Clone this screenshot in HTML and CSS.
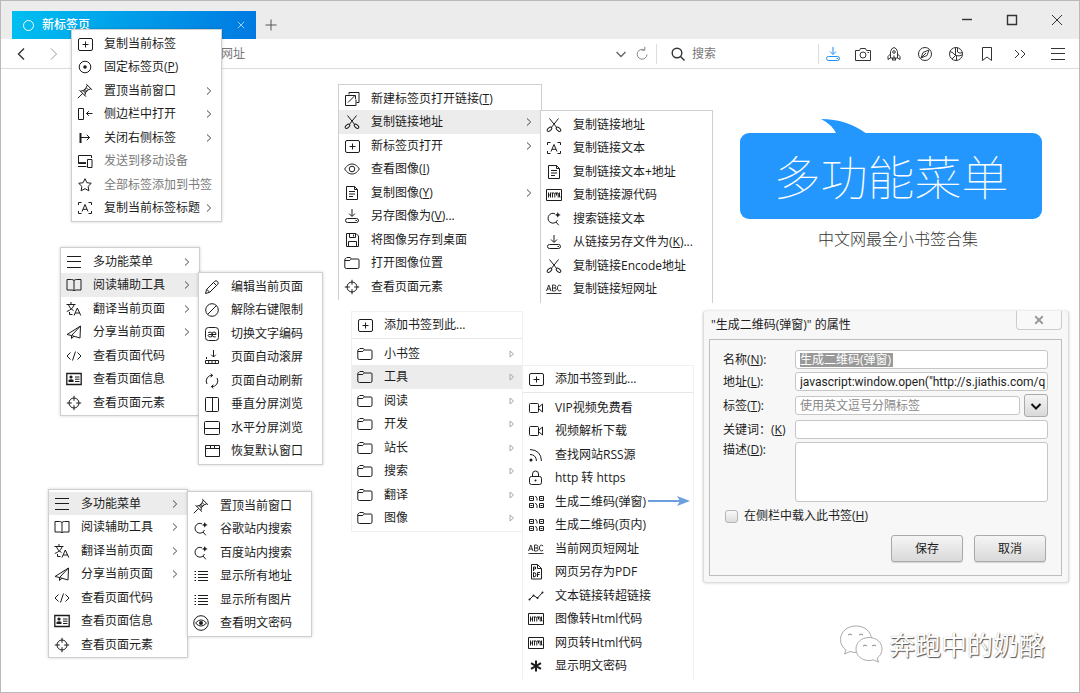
FILE: index.html
```html
<!DOCTYPE html>
<html lang="zh-CN">
<head>
<meta charset="utf-8">
<meta name="viewport" content="width=device-width, initial-scale=1">
<title>新标签页</title>
<link rel="stylesheet" href="styles.css">
</head>
<body>
<svg class="sprite" aria-hidden="true">
  <symbol id="plusbox" viewBox="0 0 16 16"><rect x="1.500" y="2.500" width="14" height="12" rx="1.500"/><path d="M8.500 5.500v6M5.500 8.500h6"/></symbol>
  <symbol id="target" viewBox="0 0 16 16"><circle cx="8" cy="8" r="5.800"/><circle class="solid" cx="8" cy="8" r="1.800"/></symbol>
  <symbol id="pin" viewBox="0 0 16 16"><path d="M.8 15.200 5.800 10.300M2.500 7.200l6.500 6.500M3.500 8.200Q6.500 8.500 9.200 4.700M7.800 12.500Q7.500 9.500 11.300 6.800M9.200 1l5.800 5.800M10.300 2.100 9.200 4.700l2.100 2.100L13.900 5.700"/><circle cx="8" cy="8" r="1.300"/></symbol>
  <symbol id="sidebar" viewBox="0 0 16 16"><path d="M1.500 2.500h5v11h-5zM15.500 7.500H9.500M11.800 5.200 9.500 7.500l2.300 2.300"/></symbol>
  <symbol id="closeright" viewBox="0 0 16 16"><path stroke-width="2" d="M3.500 3v10"/><path d="M4 7.500h8.500M9.800 4.800 12.500 7.500l-2.700 2.700"/></symbol>
  <symbol id="devices" viewBox="0 0 16 16"><path d="M14.500 5V2.500h-13v8H9M1 13.500h8.500M10.500 6.500H15v8h-4.500z"/><path stroke-width="1.800" d="M1.500 10H9"/></symbol>
  <symbol id="star" viewBox="0 0 16 16"><path d="m8 1.700 1.900 4 4.400.6-3.200 3.100.8 4.400L8 11.700l-3.900 2.100.8-4.400-3.200-3.100 4.400-.6z"/></symbol>
  <symbol id="scanA" viewBox="0 0 16 16"><path d="M1.500 5V2.500h3M11.500 2.500h3V5M14.500 11v2.500h-3M4.500 13.500h-3V11M5 11.500 8 4.500l3 7M6 9.300h4"/></symbol>
  <symbol id="open" viewBox="0 0 16 16"><path d="M5 3.500v-2h10v10h-2.500M8 4.500H1.500v10h10.500V8.500M4 11.500 11 4.500M8 4.500h3.500V8"/></symbol>
  <symbol id="cut" viewBox="0 0 16 16"><path d="M3.500 1.500 10.700 10.500M12.500 1.500 5.300 10.500"/><ellipse cx="3.500" cy="12.300" rx="2.700" ry="1.500" transform="rotate(-40 3.500 12.300)"/><ellipse cx="12.500" cy="12.300" rx="2.700" ry="1.500" transform="rotate(40 12.500 12.300)"/></symbol>
  <symbol id="eye" viewBox="0 0 16 16"><path d="M.7 8C3 4.300 5.500 3 8 3s5 1.300 7.300 5C13 11.700 10.500 13 8 13S3 11.700.7 8z"/><circle cx="8" cy="8" r="2.800"/></symbol>
  <symbol id="doc" viewBox="0 0 16 16"><path d="M2.500 1.500h8l3 3v10h-11zM10.500 1.500v3h3M5 6.500h6M5 9h6M5 11.500h4"/></symbol>
  <symbol id="save" viewBox="0 0 16 16"><path d="M8 1v7M5 5.500l3 3 3-3"/><rect x="1.500" y="10.500" width="13" height="4" rx="2"/><path d="M11.500 12.500h1.500"/></symbol>
  <symbol id="floppy" viewBox="0 0 16 16"><path d="M2.500 1.500h9.500l2.500 2.500v10.500h-12zM5.500 1.500v4h6v-4M9.500 2.500v2M4.500 14.500v-5h8v5"/></symbol>
  <symbol id="folder" viewBox="0 0 16 16"><path d="M.8 4.500q0-1 1-1l1-1h3.500l1.200 1.500h6.500q1 0 1 1V12q0 1.500-1.500 1.500H2.300Q.8 13.500.8 12zM.8 5.500h5l1.500-1.500"/></symbol>
  <symbol id="cross" viewBox="0 0 16 16"><circle cx="8" cy="8" r="5"/><path d="M8 .8v5M8 10.200v5M.8 8h5M10.200 8h5"/></symbol>
  <symbol id="html" viewBox="0 0 16 16"><path d="M.5 2.500h15v11H.5z"/><path d="M2.500 5.500v5M4.500 5.500v5M2.500 8h2M5.500 6h2.500M6.500 6v4.500M8.800 10.500V6h3.400v4.500M10.500 6v2.500M13.500 5.500V10h1"/></symbol>
  <symbol id="searchplus" viewBox="0 0 16 16"><path d="M9 2.800A4.900 4.900 0 1 0 11.500 9M10 11l2.800 3.300"/><path class="solid" d="M11.800 1l.9 2 2 .9-2 .9-.9 2-.9-2-2-.9 2-.9z"/></symbol>
  <symbol id="abc" viewBox="0 0 16 16"><path stroke-width=".9" d="M.5 10 2.800 4 5 10M1.300 8h3M6.500 4v6h1.800q1.900-.1 1.900-1.600T8.300 7H6.500M6.500 4h1.800q1.600.1 1.600 1.500T8.300 7M15.200 5q-3.300-2.500-3.800 2 .5 4.500 3.800 2.200M.5 12.500h15"/></symbol>
  <symbol id="lines" viewBox="0 0 16 16"><path d="M1 2.500h14M1 7.500h14M1 13.500h14"/></symbol>
  <symbol id="book" viewBox="0 0 16 16"><path d="M8 3.500Q7 2.500 5.500 2.500H1v10.500h5q1.500 0 2 1 .5-1 2-1h5V2.500h-4.500Q9 2.500 8 3.500zV14"/></symbol>
  <symbol id="translate" viewBox="0 0 16 16"><path d="M.5 3.500h9M5 1v2.500M2.500 4q1.500 4 5 5.500M8 4Q6.500 8.500.8 10.500M8 14.500l3.300-7.500 3.500 7.500M9.200 12h4.600M3.500 11v2.500h3"/></symbol>
  <symbol id="send" viewBox="0 0 16 16"><path d="M14.500 2 1 10.500l4.500 1L14 14zM14.500 2l-9 9.500v3L8 12.200"/></symbol>
  <symbol id="code" viewBox="0 0 16 16"><path d="M4.500 4.500 1 8l3.500 3.500M11.500 4.500 15 8l-3.500 3.500M9.500 3.500l-3 9"/></symbol>
  <symbol id="card" viewBox="0 0 16 16"><path stroke-width="1.300" d="M.8 2.500h14.400v11H.8z"/><circle class="solid" cx="5" cy="6" r="1.600"/><path class="solid" d="M2.500 11V9q2.500-1.500 5 0v2z"/><path d="M9 6h4.500M9 8.200h4.500M9 10.500h4.500"/></symbol>
  <symbol id="pencil" viewBox="0 0 16 16"><path d="m1.500 14.500 1.200-4.200 8-8Q12 1 13.500 2.500T13.700 5.300l-8 8zM9.500 3.500l3 3M2.700 10.300l3 3"/></symbol>
  <symbol id="ban" viewBox="0 0 16 16"><circle cx="8" cy="8" r="6.300"/><path d="m3.500 12.500 9-9"/></symbol>
  <symbol id="ae" viewBox="0 0 16 16"><rect x="1.500" y="1.500" width="13" height="13" rx="3"/><path d="M4.200 6.500q3.300-1.300 3.800.8v3.200q-1.500.6-3 .3-1.700-1.300-.3-2.300H12q.2-2.500-2-2.500t-2 2.300 2 2.600h1.800"/></symbol>
  <symbol id="scroll" viewBox="0 0 16 16"><path d="M9.500 1v7M7.200 5.700 9.500 8l2.300-2.300M2.500 8v2M1.500 11.500h13v3h-13zM4.700 11.500v3M8 11.500v3M11.300 11.500v3"/></symbol>
  <symbol id="refresh2" viewBox="0 0 16 16"><path d="M3 11A5.700 5.700 0 0 1 8.500 2.400M6.700.7 8.700 2.400 6.700 4.300M13 5a5.700 5.700 0 0 1-5.500 8.600M9.300 11.700l-2 1.900 2 1.700"/></symbol>
  <symbol id="vsplit" viewBox="0 0 16 16"><rect x="1.500" y="1.500" width="13" height="14" rx="1"/><path d="M8.500 1.500v14"/></symbol>
  <symbol id="hsplit" viewBox="0 0 16 16"><rect x=".5" y="1.500" width="15" height="13" rx="1"/><path d="M1 8.500h14"/></symbol>
  <symbol id="window" viewBox="0 0 16 16"><path d="M1.500 2.500h14v11h-14zM1.500 5.500h14M6.500 2.500v3M10.500 2.500v3"/></symbol>
  <symbol id="list" viewBox="0 0 16 16"><path d="M5 3.500h10M5 6.500h10M5 9.500h10M5 12.500h10M1.500 3.500H3M1.500 6.500H3M1.500 9.500H3M1.500 12.500H3"/></symbol>
  <symbol id="eyering" viewBox="0 0 16 16"><circle cx="8" cy="8" r="7.300"/><path d="M2.500 8Q8 1.800 13.500 8 8 14.200 2.500 8z"/><circle class="solid" cx="8" cy="8" r="2"/></symbol>
  <symbol id="video" viewBox="0 0 16 16"><rect x="1.500" y="3.500" width="9" height="9" rx="1"/><path d="M10.500 7.500 14.500 4v8L10.500 8.500"/></symbol>
  <symbol id="rss" viewBox="0 0 16 16"><circle class="solid" cx="3" cy="13" r="1.500"/><path d="M2 7.500Q8 7.500 8.500 14M2 2.500Q13 3 13.500 14"/></symbol>
  <symbol id="lock" viewBox="0 0 16 16"><path d="M4.500 6.500V4q0-3 3-3t3 3v2.500"/><rect x="1.500" y="6.500" width="12" height="8" rx="2"/><circle class="solid" cx="7.500" cy="10.500" r="1"/></symbol>
  <symbol id="qr" viewBox="0 0 16 16"><path d="M1.500 2.500h4v4h-4zM11.500 2.500h4v4h-4zM1.500 9.500h4v4h-4zM11.500 9.500h4v4h-4zM7.500 2l1.500 2.500v2M7.500 9l1.500 2.500v2.500M2.500 4.500h2M12.500 4.500h2M2.500 11.500h2M12.500 11.500h2"/></symbol>
  <symbol id="pdf" viewBox="0 0 16 16"><path d="M3.500.5h6l4 4v10.500h-10zM9.500.5v4h4M5.500 7V3h2v2h-2M5.500 8.500v4.500q2.500 0 2.500-2.200T5.500 8.500zM9.500 13V8.500H12M9.500 10.500h2"/></symbol>
  <symbol id="chart" viewBox="0 0 16 16"><path d="m1.500 11.500 4-4 4 2.500 5-5.500"/><g class="solid"><circle cx="1.500" cy="11.500" r="1"/><circle cx="5.500" cy="7.500" r="1"/><circle cx="9.500" cy="10" r="1"/><circle cx="14.500" cy="4.500" r="1"/></g></symbol>
  <symbol id="asterisk" viewBox="0 0 16 16"><path stroke-width="2" d="M8 2.500v11M3 5.200l10 5.600M13 5.200 3 10.800"/></symbol>
  <symbol id="chev" viewBox="0 0 6 10"><path d="m1 1.500 3.700 3.500L1 8.500"/></symbol>
  <symbol id="tri" viewBox="0 0 6 10"><path d="M1 2 4.500 5 1 8z"/></symbol>
  <symbol id="camera" viewBox="0 0 16 16"><path d="M.5 4.500h4l1-2h5l1 2h4v10H.5zM12.500 6.500H14"/><circle cx="8" cy="9" r="3"/></symbol>
  <symbol id="rocket" viewBox="0 0 16 16"><path d="M4.500 12V5.500Q5.500 2 8 1.500q2.500.5 3.500 4V12zM4.500 8 2 10.500v3L4.500 12M11.500 8l2.500 2.500v3L11.500 12M8 9.500v5.500M6.500 12v2.500M9.500 12v2.500"/><circle cx="8" cy="6" r="1.300"/></symbol>
  <symbol id="compass" viewBox="0 0 16 16"><circle cx="8" cy="8" r="6.500"/><path d="M12 4 10 9.500 4 12l2-5.500zM4 12l5-5"/></symbol>
  <symbol id="ball" viewBox="0 0 16 16"><circle cx="8" cy="8" r="6.500"/><path d="M7.500 1.500v8M7.500 9.500 4 13M2 5.500q3.500 1 5.500 4M9.500 2v4q2.500 2 5 .5M7.500 9.500q4 1 6.500-.5M8.500 10v4.500"/></symbol>
  <symbol id="mark" viewBox="0 0 16 16"><path d="M3.500 1.500h9v13L8 11l-4.500 3.500z"/></symbol>
  <symbol id="more" viewBox="0 0 16 16"><path d="M3 4l4 4-4 4M9 4l4 4-4 4"/></symbol>
  <symbol id="back" viewBox="0 0 16 16"><path d="M11 2.500 5.500 8l5.500 5.500"/></symbol>
  <symbol id="forward" viewBox="0 0 16 16"><path d="M5 2.500 10.500 8 5 13.500"/></symbol>
  <symbol id="down" viewBox="0 0 16 16"><path d="m3.500 6 4.500 4.500L12.500 6"/></symbol>
  <symbol id="reload" viewBox="0 0 16 16"><path d="M10.500 4A4.900 4.900 0 1 0 13 8.500M7.500 4.200h3.300V.8"/></symbol>
  <symbol id="search" viewBox="0 0 16 16"><circle cx="7" cy="7" r="4.800"/><path d="m10.500 10.500 4 4"/></symbol>
  <symbol id="plus" viewBox="0 0 16 16"><path d="M8 2.500v11M2.500 8h11"/></symbol>
  <symbol id="x" viewBox="0 0 16 16"><path d="m3 3 10 10M13 3 3 13"/></symbol>
  <symbol id="min" viewBox="0 0 16 16"><path d="M3 7.500h10"/></symbol>
  <symbol id="max" viewBox="0 0 16 16"><path d="M3.500 3.500h9v9h-9z"/></symbol>
</svg>

<div class="browser">
  <header class="titlebar">
    <div class="tab">
      <span class="ring"></span>
      <span class="tab-title">新标签页</span>
      <button class="tab-close" aria-label="关闭标签"><svg class="icon-xs"><use href="#x"/></svg></button>
    </div>
    <button class="new-tab" aria-label="新建标签"><svg class="icon"><use href="#plus"/></svg></button>
    <div class="window-buttons">
      <button aria-label="最小化"><svg class="icon thick"><use href="#min"/></svg></button>
      <button aria-label="最大化"><svg class="icon thick"><use href="#max"/></svg></button>
      <button aria-label="关闭"><svg class="icon"><use href="#x"/></svg></button>
    </div>
  </header>

  <div class="toolbar">
    <button class="nav" aria-label="后退"><svg class="icon thick"><use href="#back"/></svg></button>
    <button class="nav faded" aria-label="前进"><svg class="icon"><use href="#forward"/></svg></button>
    <input class="address" type="text" placeholder="网址" aria-label="网址">
    <button class="small grey" aria-label="历史"><svg class="icon thick"><use href="#down"/></svg></button>
    <button class="small reload" aria-label="刷新"><svg class="icon"><use href="#reload"/></svg></button>
    <div class="searchbox">
      <svg class="icon thick"><use href="#search"/></svg>
      <input type="text" placeholder="搜索" aria-label="搜索">
    </div>
    <div class="tools">
      <button class="blue" aria-label="下载"><svg class="icon"><use href="#save"/></svg></button>
      <button aria-label="截图"><svg class="icon"><use href="#camera"/></svg></button>
      <button aria-label="加速"><svg class="icon"><use href="#rocket"/></svg></button>
      <button aria-label="导航"><svg class="icon"><use href="#compass"/></svg></button>
      <button aria-label="网络"><svg class="icon"><use href="#ball"/></svg></button>
      <button aria-label="书签"><svg class="icon"><use href="#mark"/></svg></button>
      <button class="more" aria-label="更多"><svg class="icon"><use href="#more"/></svg></button>
      <button class="main-menu" aria-label="菜单"><svg class="icon"><use href="#lines"/></svg></button>
    </div>
  </div>

  <main class="canvas">
    <nav class="menu tab-menu"><ul>
      <li><button><svg class="icon"><use href="#plusbox"/></svg><span>复制当前标签</span></button></li>
      <li><button><svg class="icon"><use href="#target"/></svg><span>固定标签页(<u>P</u>)</span></button></li>
      <li><button><svg class="icon"><use href="#pin"/></svg><span>置顶当前窗口</span><svg class="chev"><use href="#chev"/></svg></button></li>
      <li><button><svg class="icon"><use href="#sidebar"/></svg><span>侧边栏中打开</span><svg class="chev"><use href="#chev"/></svg></button></li>
      <li><button><svg class="icon"><use href="#closeright"/></svg><span>关闭右侧标签</span><svg class="chev"><use href="#chev"/></svg></button></li>
      <li><button class="muted"><svg class="icon"><use href="#devices"/></svg><span>发送到移动设备</span></button></li>
      <li><button class="muted"><svg class="icon"><use href="#star"/></svg><span>全部标签添加到书签</span></button></li>
      <li><button><svg class="icon"><use href="#scanA"/></svg><span>复制当前标签标题</span><svg class="chev"><use href="#chev"/></svg></button></li>
    </ul></nav>

    <nav class="menu cropped link-menu"><ul>
      <li><button><svg class="icon"><use href="#open"/></svg><span>新建标签页打开链接(<u>T</u>)</span></button></li>
      <li><button class="active"><svg class="icon"><use href="#cut"/></svg><span>复制链接地址</span><svg class="chev"><use href="#chev"/></svg></button></li>
      <li><button><svg class="icon"><use href="#plusbox"/></svg><span>新标签页打开</span><svg class="chev"><use href="#chev"/></svg></button></li>
      <li><button><svg class="icon"><use href="#eye"/></svg><span>查看图像(<u>I</u>)</span></button></li>
      <li><button><svg class="icon"><use href="#doc"/></svg><span>复制图像(<u>Y</u>)</span><svg class="chev"><use href="#chev"/></svg></button></li>
      <li><button><svg class="icon"><use href="#save"/></svg><span>另存图像为(<u>V</u>)...</span></button></li>
      <li><button><svg class="icon"><use href="#floppy"/></svg><span>将图像另存到桌面</span></button></li>
      <li><button><svg class="icon"><use href="#folder"/></svg><span>打开图像位置</span></button></li>
      <li><button><svg class="icon"><use href="#cross"/></svg><span>查看页面元素</span></button></li>
    </ul></nav>

    <nav class="menu cropped copy-menu"><ul>
      <li><button><svg class="icon"><use href="#cut"/></svg><span>复制链接地址</span></button></li>
      <li><button><svg class="icon"><use href="#scanA"/></svg><span>复制链接文本</span></button></li>
      <li><button><svg class="icon"><use href="#doc"/></svg><span>复制链接文本+地址</span></button></li>
      <li><button><svg class="icon"><use href="#html"/></svg><span>复制链接源代码</span></button></li>
      <li><button><svg class="icon"><use href="#searchplus"/></svg><span>搜索链接文本</span></button></li>
      <li><button><svg class="icon"><use href="#save"/></svg><span>从链接另存文件为(<u>K</u>)...</span></button></li>
      <li><button><svg class="icon"><use href="#cut"/></svg><span>复制链接Encode地址</span></button></li>
      <li><button><svg class="icon"><use href="#abc"/></svg><span>复制链接短网址</span></button></li>
    </ul></nav>

    <nav class="menu page-menu"><ul>
      <li><button><svg class="icon"><use href="#lines"/></svg><span>多功能菜单</span><svg class="chev"><use href="#chev"/></svg></button></li>
      <li><button class="active"><svg class="icon"><use href="#book"/></svg><span>阅读辅助工具</span><svg class="chev"><use href="#chev"/></svg></button></li>
      <li><button><svg class="icon"><use href="#translate"/></svg><span>翻译当前页面</span><svg class="chev"><use href="#chev"/></svg></button></li>
      <li><button><svg class="icon"><use href="#send"/></svg><span>分享当前页面</span><svg class="chev"><use href="#chev"/></svg></button></li>
      <li><button><svg class="icon"><use href="#code"/></svg><span>查看页面代码</span></button></li>
      <li><button><svg class="icon"><use href="#card"/></svg><span>查看页面信息</span></button></li>
      <li><button><svg class="icon"><use href="#cross"/></svg><span>查看页面元素</span></button></li>
    </ul></nav>

    <nav class="menu reading-menu"><ul>
      <li><button><svg class="icon"><use href="#pencil"/></svg><span>编辑当前页面</span></button></li>
      <li><button><svg class="icon"><use href="#ban"/></svg><span>解除右键限制</span></button></li>
      <li><button><svg class="icon"><use href="#ae"/></svg><span>切换文字编码</span></button></li>
      <li><button><svg class="icon"><use href="#scroll"/></svg><span>页面自动滚屏</span></button></li>
      <li><button><svg class="icon"><use href="#refresh2"/></svg><span>页面自动刷新</span></button></li>
      <li><button><svg class="icon"><use href="#vsplit"/></svg><span>垂直分屏浏览</span></button></li>
      <li><button><svg class="icon"><use href="#hsplit"/></svg><span>水平分屏浏览</span></button></li>
      <li><button><svg class="icon"><use href="#window"/></svg><span>恢复默认窗口</span></button></li>
    </ul></nav>

    <nav class="menu page-menu-two"><ul>
      <li><button class="active"><svg class="icon"><use href="#lines"/></svg><span>多功能菜单</span><svg class="chev"><use href="#chev"/></svg></button></li>
      <li><button><svg class="icon"><use href="#book"/></svg><span>阅读辅助工具</span><svg class="chev"><use href="#chev"/></svg></button></li>
      <li><button><svg class="icon"><use href="#translate"/></svg><span>翻译当前页面</span><svg class="chev"><use href="#chev"/></svg></button></li>
      <li><button><svg class="icon"><use href="#send"/></svg><span>分享当前页面</span><svg class="chev"><use href="#chev"/></svg></button></li>
      <li><button><svg class="icon"><use href="#code"/></svg><span>查看页面代码</span></button></li>
      <li><button><svg class="icon"><use href="#card"/></svg><span>查看页面信息</span></button></li>
      <li><button><svg class="icon"><use href="#cross"/></svg><span>查看页面元素</span></button></li>
    </ul></nav>

    <nav class="menu multi-menu"><ul>
      <li><button><svg class="icon"><use href="#pin"/></svg><span>置顶当前窗口</span></button></li>
      <li><button><svg class="icon"><use href="#searchplus"/></svg><span>谷歌站内搜索</span></button></li>
      <li><button><svg class="icon"><use href="#searchplus"/></svg><span>百度站内搜索</span></button></li>
      <li><button><svg class="icon"><use href="#list"/></svg><span>显示所有地址</span></button></li>
      <li><button><svg class="icon"><use href="#list"/></svg><span>显示所有图片</span></button></li>
      <li><button><svg class="icon"><use href="#eyering"/></svg><span>查看明文密码</span></button></li>
    </ul></nav>

    <nav class="menu soft bookmark-menu">
      <div class="add"><button><svg class="icon"><use href="#plusbox"/></svg><span>添加书签到此...</span></button></div>
      <ul>
      <li><button><svg class="icon"><use href="#folder"/></svg><span>小书签</span><svg class="chev tri"><use href="#tri"/></svg></button></li>
      <li><button class="active"><svg class="icon"><use href="#folder"/></svg><span>工具</span><svg class="chev tri"><use href="#tri"/></svg></button></li>
      <li><button><svg class="icon"><use href="#folder"/></svg><span>阅读</span><svg class="chev tri"><use href="#tri"/></svg></button></li>
      <li><button><svg class="icon"><use href="#folder"/></svg><span>开发</span><svg class="chev tri"><use href="#tri"/></svg></button></li>
      <li><button><svg class="icon"><use href="#folder"/></svg><span>站长</span><svg class="chev tri"><use href="#tri"/></svg></button></li>
      <li><button><svg class="icon"><use href="#folder"/></svg><span>搜索</span><svg class="chev tri"><use href="#tri"/></svg></button></li>
      <li><button><svg class="icon"><use href="#folder"/></svg><span>翻译</span><svg class="chev tri"><use href="#tri"/></svg></button></li>
      <li><button><svg class="icon"><use href="#folder"/></svg><span>图像</span><svg class="chev tri"><use href="#tri"/></svg></button></li>
    </ul></nav>

    <nav class="menu soft tools-menu">
      <div class="add"><button><svg class="icon"><use href="#plusbox"/></svg><span>添加书签到此...</span></button></div>
      <ul>
      <li><button><svg class="icon"><use href="#video"/></svg><span>VIP视频免费看</span></button></li>
      <li><button><svg class="icon"><use href="#video"/></svg><span>视频解析下载</span></button></li>
      <li><button><svg class="icon"><use href="#rss"/></svg><span>查找网站RSS源</span></button></li>
      <li><button><svg class="icon"><use href="#lock"/></svg><span>http 转 https</span></button></li>
      <li><button><svg class="icon"><use href="#qr"/></svg><span>生成二维码(弹窗)</span></button></li>
      <li><button><svg class="icon"><use href="#qr"/></svg><span>生成二维码(页内)</span></button></li>
      <li><button><svg class="icon"><use href="#abc"/></svg><span>当前网页短网址</span></button></li>
      <li><button><svg class="icon"><use href="#pdf"/></svg><span>网页另存为PDF</span></button></li>
      <li><button><svg class="icon"><use href="#chart"/></svg><span>文本链接转超链接</span></button></li>
      <li><button><svg class="icon"><use href="#html"/></svg><span>图像转Html代码</span></button></li>
      <li><button><svg class="icon"><use href="#html"/></svg><span>网页转Html代码</span></button></li>
      <li><button><svg class="icon"><use href="#asterisk"/></svg><span>显示明文密码</span></button></li>
    </ul></nav>

    <svg class="arrow" viewBox="0 0 42 12" aria-hidden="true"><path class="shaft" d="M0 6h34"/><path class="head" d="M29 1l13 5-13 5 3-5z"/></svg>

    <section class="promo">
      <svg class="tail" viewBox="0 0 46 16" aria-hidden="true"><path d="M0 0Q26 0 46 15v1H16Q12 6 0 0z"/></svg>
      <h1>多功能菜单</h1>
      <p>中文网最全小书签合集</p>
    </section>

    <form class="dialog" aria-labelledby="dialog-title">
      <header>
        <h2 id="dialog-title">"生成二维码(弹窗)" 的属性</h2>
        <button type="button" class="dialog-close" aria-label="关闭"><svg class="icon-sm"><use href="#x"/></svg></button>
      </header>
      <div class="panel">
        <div class="fields">
          <label for="f-name">名称(<u>N</u>):</label>
          <div class="field"><input id="f-name" class="selected" type="text" value="生成二维码(弹窗)" size="12"></div>
          <label for="f-url">地址(<u>L</u>):</label>
          <div class="field"><input id="f-url" class="url" type="text" value="javascript:window.open(&quot;http://s.jiathis.com/q"></div>
          <label for="f-tag">标签(<u>T</u>):</label>
          <div class="tag-row">
            <div class="field"><input id="f-tag" type="text" placeholder="使用英文逗号分隔标签"></div>
            <button type="button" class="expand" aria-label="展开标签"><svg class="icon"><use href="#down"/></svg></button>
          </div>
          <label for="f-key">关键词：(<u>K</u>)</label>
          <div class="field"><input id="f-key" type="text"></div>
          <label for="f-desc">描述(<u>D</u>):</label>
          <textarea id="f-desc"></textarea>
        </div>
        <label class="check"><input type="checkbox"><span>在侧栏中载入此书签(<u>H</u>)</span></label>
        <div class="actions">
          <button type="button">保存</button>
          <button type="button">取消</button>
        </div>
      </div>
    </form>

    <div class="watermark">
      <svg viewBox="0 0 44 40" aria-hidden="true">
        <path d="M17 2C8 2 1.500 8 1.500 15.500c0 4.500 2 8 5.500 10.500L5.500 30l5.500-2.500q3 1 6 1c9 0 15.500-5.500 15.500-13S26 2 17 2z"/>
        <path d="M30 13.500c-7.500 0-13 5-13 11.500s5.500 11.500 13 11.500q2.500 0 4.500-.7l5 2.400-1.300-4.200c3-2 4.800-5.200 4.800-9 0-6.500-5.500-11.500-13-11.500z"/>
        <path class="eyes" d="M9 11q2-2 4 0M20 11q2-2 4 0M24 22q2-2 4 0M33 22q2-2 4 0"/>
      </svg>
      <span>奔跑中的奶酪</span>
    </div>
  </main>
</div>
</body>
</html>
```
FILE: styles.css
```css
* { box-sizing: border-box; }

body {
  margin: 0;
  background: #fff;
  color: #1c1c1c;
  font: 12px/16px "Open Sans", "Noto Sans CJK SC", sans-serif;
}

button, input, textarea {
  margin: 0;
  padding: 0;
  border: 0;
  background: none;
  color: inherit;
  font: inherit;
}

input, textarea { outline: none; min-width: 0; }
ul { list-style: none; margin: 0; padding: 0; }
u { text-underline-offset: 1px; }
.sprite { position: absolute; width: 0; height: 0; }

svg { flex: none; display: block; fill: none; stroke: currentColor; stroke-width: 1px; }
.solid { fill: currentColor; stroke: none; }
.icon { width: 16px; height: 16px; }
.icon-sm { width: 12px; height: 12px; }
.icon-xs { width: 10px; height: 10px; }
.thick { stroke-width: 1.4px; }

.browser {
  min-height: 100vh;
  display: flex;
  flex-direction: column;
  border: 1px solid #b9b9b9;
}

/* Title bar */
.titlebar {
  height: 38px;
  padding-left: 11px;
  display: flex;
  align-items: flex-end;
  background: #ececec;
}
.tab {
  width: 244px;
  height: 28px;
  padding: 0 10px 0 11px;
  display: flex;
  align-items: center;
  gap: 8px;
  color: #fff;
  background: linear-gradient(100deg, #00bff0, #0079e2);
}
.ring { width: 11px; height: 11px; border: 1px solid #fff; border-radius: 50%; }
.tab-title { flex: 1; font-weight: 500; }
.tab-close { stroke-width: 2px; }
.new-tab { width: 30px; height: 28px; display: grid; place-items: center; color: #555; }
.window-buttons { margin-left: auto; display: flex; align-self: stretch; }
.window-buttons button { width: 45px; display: grid; place-items: center; color: #333; }

/* Toolbar */
.toolbar {
  height: 30px;
  display: flex;
  align-items: center;
  border-bottom: 1px solid #dcdcdc;
  color: #333;
}
.toolbar button { display: grid; place-items: center; }
.nav { width: 33px; margin-left: 3px; }
.nav + .nav { margin-left: 0; }
.toolbar .faded { color: #999; }
.toolbar .grey { color: #666; }
.toolbar .reload { color: #888; }
.address { flex: 1; padding-left: 151px; }
.small { width: 21px; }
.searchbox {
  width: 163px;
  height: 20px;
  margin-left: 4px;
  padding-left: 13px;
  display: flex;
  align-items: center;
  gap: 6px;
  border: solid #ddd;
  border-width: 0 1px;
}
.searchbox input { flex: 1; }
.toolbar input::placeholder { color: #777; opacity: 1; }
.tools { display: flex; padding-right: 2px; }
.tools button { width: 31px; }
.tools .blue { color: #1e90f0; width: 28px; }
.tools .more { width: 36px; }
.tools .main-menu { width: 39px; }

/* Free canvas with open menus and windows */
.canvas { flex: 1; }

.menu {
  position: absolute;
  padding: 2px 0 1px;
  border: 1px solid #cfcfcf;
  background: #fff;
  box-shadow: 0 0 3px rgba(0, 0, 0, .18);
}
.menu button {
  width: 100%;
  height: 100%;
  padding: 0 9px 0 5px;
  display: flex;
  align-items: center;
  gap: 11px;
  text-align: left;
  white-space: nowrap;
}
.menu li { height: 23px; }
.menu li:nth-child(even) { height: 24px; }
.menu span { flex: 1; }
.menu .active { background: #ececec; }
.menu .muted span { color: #7b7b7b; }
.menu .chev { width: 6px; height: 10px; margin-left: -11px; color: #444; }
.menu .tri { color: #aaa; }

.menu.cropped { border-bottom: 0; box-shadow: none; padding-bottom: 2px; }
.menu.soft { padding: 0 0 1px; border-color: #f0f0f0; box-shadow: none; }
.menu.soft button { padding-right: 7px; }
.menu .add { height: 27px; margin-bottom: 3px; border-bottom: 1px solid #e6e6e6; }

.tab-menu { left: 71px; top: 29px; width: 151px; }
.link-menu { left: 338px; top: 84px; width: 204px; }
.copy-menu { left: 540px; top: 110px; width: 173px; }
.page-menu { left: 60px; top: 247px; width: 140px; }
.reading-menu { left: 198px; top: 272px; width: 125px; }
.page-menu-two { left: 48px; top: 489px; width: 140px; }
.multi-menu { left: 187px; top: 491px; width: 125px; }
.bookmark-menu { left: 351px; top: 311px; width: 172px; }
.menu.tools-menu { left: 522px; top: 365px; width: 172px; border-bottom: 0; }

.arrow { position: absolute; left: 648px; top: 495px; width: 42px; height: 12px; }
.arrow .shaft { stroke: #6c9fdd; stroke-width: 2px; }
.arrow .head { fill: #6c9fdd; stroke: none; }

/* Speech bubble */
.promo { position: absolute; top: 133px; right: 38px; width: 302px; text-align: center; }
.promo h1 {
  margin: 0;
  padding: 7px 0 9px;
  border-radius: 9px;
  background: #2497fe;
  color: #fff;
  font: 100 47px/70px "Noto Sans CJK SC", sans-serif;
}
.promo p {
  margin: 7px 0 0;
  padding-left: 14px;
  color: #333;
  font: 300 16px/24px "Noto Sans CJK SC", sans-serif;
}
.tail { position: absolute; left: 81px; top: -14px; width: 46px; height: 16px; fill: #2497fe; stroke: none; }

/* Properties dialog */
.dialog {
  position: absolute;
  top: 311px;
  right: 11px;
  width: 366px;
  padding: 0 6px 6px 5px;
  border: 1px solid #ddd;
  border-width: 0 1px 1px;
  border-radius: 3px;
  background: #f7f7f7;
  box-shadow: 0 0 3px rgba(0, 0, 0, .2);
}
.dialog header { height: 28px; display: flex; justify-content: space-between; align-items: flex-start; }
.dialog h2 { margin: 0; padding-left: 2px; font: inherit; line-height: 28px; }
.dialog-close {
  width: 46px;
  height: 19px;
  display: grid;
  place-items: center;
  border: 1px solid #ccc;
  border-top: 0;
  border-radius: 0 0 4px 4px;
  background: #f9f9f9;
  color: #999;
}
.dialog-close svg { stroke-width: 2.5px; }
.panel { padding: 10px 13px 13px; border: 1px solid #bdbdbd; }
.fields { display: grid; grid-template-columns: 72px 1fr; gap: 3px 0; align-items: center; }
.fields > label { white-space: nowrap; }
.fields > label[for="f-desc"] { align-self: start; }
.field, .fields textarea {
  min-width: 0;
  border: 1px solid #c6c6c6;
  border-radius: 3px;
  background: #fff;
}
.field { height: 19px; flex: 1; padding: 0 0 0 4px; display: flex; align-items: center; overflow: hidden; }
.field input { flex: 1; height: 16px; }
.field .url { font-family: Roboto, sans-serif; }
.field .selected { flex: none; width: 93px; height: 14px; background: #999; color: #fff; }
.field input::placeholder { color: #888; opacity: 1; }
.fields textarea { width: 100%; height: 60px; resize: none; display: block; }
.tag-row { display: flex; align-items: center; gap: 4px; min-width: 0; }
.expand, .actions button {
  border: 1px solid #aaa;
  border-radius: 3px;
  background: linear-gradient(#f5f5f5, #d9d9d9);
}
.expand { width: 24px; height: 23px; display: grid; place-items: center; }
.expand svg { stroke-width: 2px; color: #111; }
.check { height: 28px; padding-left: 2px; display: flex; align-items: center; gap: 6px; }
.check input {
  width: 13px;
  height: 13px;
  appearance: none;
  border: 1px solid #b5b5b5;
  border-radius: 3px;
  background: linear-gradient(#fafafa, #dcdcdc);
}
.actions { margin-top: 5px; padding-right: 2px; display: flex; justify-content: flex-end; gap: 11px; }
.actions button { width: 72px; height: 27px; box-shadow: 0 1px 1px rgba(0, 0, 0, .15); }

/* Signature */
.watermark {
  position: absolute;
  right: 35px;
  bottom: 29px;
  display: flex;
  align-items: center;
  gap: 6px;
  color: #fff;
  font: 26px/36px "Noto Sans CJK SC", sans-serif;
  text-shadow: 1px 1px 1px #555, 0 0 1px #aaa;
}
.watermark svg { width: 44px; height: 40px; fill: #fff; stroke: #aaa; stroke-width: 1px; }
.watermark .eyes { fill: none; stroke: #888; }
```
